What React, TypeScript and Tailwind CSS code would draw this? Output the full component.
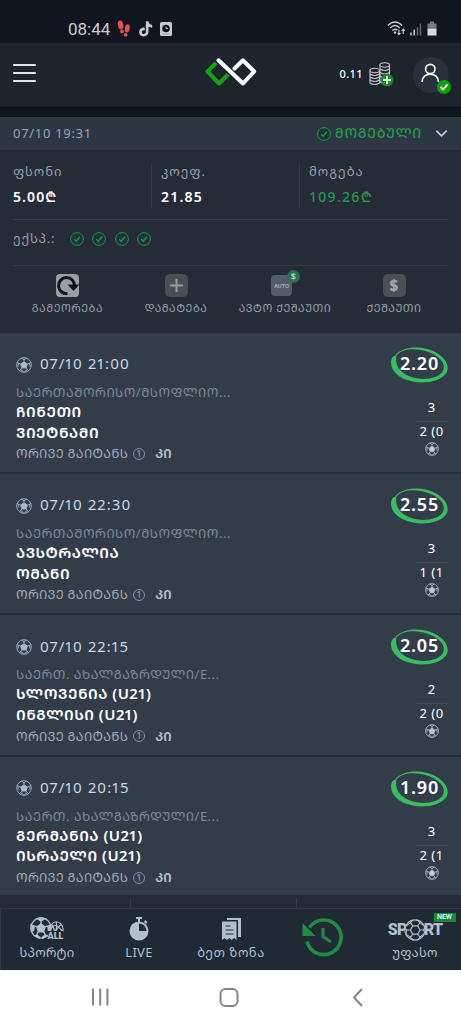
import React from 'react';
import { ChevronDown } from 'lucide-react';

const matches = [
  {
    time: '07/10 21:00',
    league: 'საერთაშორისო/მსოფლიო...',
    home: 'ჩინეთი',
    away: 'ვიეტნამი',
    odd: '2.20',
    homeScore: '3',
    awayScore: '2 (0',
  },
  {
    time: '07/10 22:30',
    league: 'საერთაშორისო/მსოფლიო...',
    home: 'ავსტრალია',
    away: 'ომანი',
    odd: '2.55',
    homeScore: '3',
    awayScore: '1 (1',
  },
  {
    time: '07/10 22:15',
    league: 'საერთ. ახალგაზრდული/E...',
    home: 'სლოვენია (U21)',
    away: 'ინგლისი (U21)',
    odd: '2.05',
    homeScore: '2',
    awayScore: '2 (0',
  },
  {
    time: '07/10 20:15',
    league: 'საერთ. ახალგაზრდული/E...',
    home: 'გერმანია (U21)',
    away: 'ისრაელი (U21)',
    odd: '1.90',
    homeScore: '3',
    awayScore: '2 (1',
  },
];

const Ball = ({ className }: { className: string }) => (
  <svg viewBox="0 0 24 24" className={className} fill="none" stroke="currentColor" strokeWidth="1.3">
    <circle cx="12" cy="12" r="11" />
    <path d="M12 7l5 3.600-1.900 5.900H8.900L7 10.600z" fill="currentColor" />
    <path d="M12 7V3.500M17 10.600l3.600-1.300M15.100 16.500l2.200 3M8.900 16.500l-2.200 3M7 10.600L3.400 9.300" />
    <path d="M8 1.800l4 2.200 4-2.200M22.500 8l-2.200 1.500.600 5M18.800 20.600l-1.800-1.500-4.500 3M5.200 20.600L7 19.100l4.500 3M1.500 8l2.200 1.500-.6 5" />
  </svg>
);

const PatchBall = ({ className }: { className: string }) => (
  <svg viewBox="0 0 24 24" className={className} fill="none" stroke="currentColor" strokeWidth="1.400">
    <circle cx="12" cy="12" r="11" />
    <path d="M12 7.500l4.500 3.300-1.700 5.300H9.200l-1.700-5.300zM8 1.800l4 2.600 4-2.600-4-1zM22.800 8.500l-3.300 1.500.500 4.500 2.500 1zM18.800 20.600l-2.300-1-3 2.500.5 1zM5.200 20.600l2.300-1 3 2.500-.5 1zM1.200 8.500L4.500 10 4 14.500l-2.500 1z" fill="currentColor" />
    <path d="M12 7.500V4M16.500 10.800l3-1M14.800 16l2 3.500M9.200 16l-2 3.500M7.500 10.800l-3-1" />
  </svg>
);

const OutlineBall = ({ className }: { className: string }) => (
  <svg viewBox="0 0 24 24" className={className} fill="#202a35" stroke="currentColor" strokeWidth="1.200">
    <circle cx="12" cy="12" r="11" />
    <path d="M9.500 7.500h5.500l2.500 4.500-2.500 4.500H9.500L7 12z" />
    <path d="M9.500 7.500L7 4l3-3M15 7.500L17.500 4l4.500 3.500M17.500 12h4l1-3M15 16.500l2.500 3.500 4-4M9.500 16.500L7 20l4 3M7 12H3l-2-2M7 4L2.500 7.500M3 12l-1 5M17.500 4L14 1M21.500 12l1 3M17.500 20l-3 3M7 20l-4-3" />
  </svg>
);

const CheckCircle = ({ className }: { className: string }) => (
  <svg viewBox="0 0 14 14" className={className} fill="#17382f" stroke="currentColor">
    <circle cx="7" cy="7" r="6.400" />
    <path d="M4.200 7.200l2 2L10 4.800" fill="none" strokeWidth="1.500" />
  </svg>
);

const StatusBar = () => (
  <div className="h-[43px] bg-[#10151e] flex items-end pl-[68px] pr-[24px] pb-[5px] text-[#c9cbce]">
    <span className="font-['Roboto'] text-[17px] leading-[20px] mb-[-1px] w-[49px]">08:44</span>
    <svg viewBox="0 0 14 17" className="w-[14px] h-[17px] mb-[1px]" fill="#dc5453">
      <ellipse cx="3.600" cy="5" rx="2.700" ry="4.500" transform="rotate(-10 3.600 5)" />
      <circle cx="5" cy="11.500" r="1.900" />
      <ellipse cx="10.300" cy="8.300" rx="2.400" ry="4.200" transform="rotate(10 10.300 8.300)" />
      <circle cx="8.600" cy="14.800" r="1.900" />
    </svg>
    <svg viewBox="0 0 24 24" className="w-[17px] h-[16px] ml-[6px] mb-[1px]" fill="currentColor">
      <path d="M12.500.5h4c.2 3.200 2.500 5.300 5.500 5.500v4c-2.200 0-4-.7-5.500-1.700v8c0 9-14 9.500-14 .2 0-4.500 4-7.300 8.300-6.500v4.200c-2-.7-4.300.4-4.300 2.500 0 3.800 6 3.500 6-.6z" />
    </svg>
    <svg viewBox="0 0 12 14" className="w-[12px] h-[14px] ml-[6px] mb-[2px]">
      <rect width="12" height="14" rx="1.500" fill="currentColor" />
      <circle cx="6" cy="6.500" r="3.800" fill="#10151e" />
      <path d="M6 4.500v2h2" stroke="#c9cbce" fill="none" />
      <path d="M2.500 12h7" stroke="#8f9296" strokeWidth=".7" />
    </svg>
    <svg viewBox="0 0 50 15" className="w-[50px] h-[15px] ml-auto mb-[2px]" fill="none" stroke="currentColor" strokeWidth="1.500">
      <path d="M.8 4.500Q8-2.700 15.200 4.500M3.200 7Q8 2.200 12.800 7M5.300 9.500Q8 7 10.500 9.300" />
      <circle cx="8" cy="11.500" r="1.200" fill="currentColor" stroke="none" />
      <path d="M12 8.500v5M10.500 12l1.500 1.700 1.500-1.700M16.200 13V8M14.700 9.800L16.200 8l1.500 1.800" strokeWidth="1.100" />
      <path d="M24 11.500v3M27.200 8.500v6" />
      <path d="M30.500 6v8.500M33.500 2.500v12" stroke="#65696f" />
      <path d="M43 .5h4v2h2.500v5h-9v-5H43z" fill="#777b80" stroke="none" />
      <path d="M40.500 7.500h9v7h-9z" fill="#d8dadc" stroke="none" />
    </svg>
  </div>
);

const Header = () => (
  <header className="h-[64px] bg-[#1e242c] flex items-center px-[13px] border-b border-[#1b2028]">
    <div className="w-[23px] flex flex-col gap-[6px] pb-[3px]">
      <i className="h-[2px] rounded bg-[#e4e5e6]" />
      <i className="h-[2px] rounded bg-[#e4e5e6]" />
      <i className="h-[2px] rounded bg-[#e4e5e6]" />
    </div>
    <svg viewBox="0 0 52 28" className="w-[52px] h-[28px] ml-[169px] mb-[6px]" fill="none" strokeWidth="4" strokeLinejoin="round">
      <path d="M11 5L2.500 13.500 14 25.500 23 16.500" stroke="#14a314" />
      <path d="M29.500 10.500L38 2.300 49.200 13.500 38 25.500 13.500 2.300" stroke="#fff" strokeLinecap="round" />
    </svg>
    <span className="ml-auto text-[11px] font-medium tracking-[0.400px] text-white mb-[1px]">0.11</span>
    <svg viewBox="0 0 25 25" className="w-[25px] h-[25px] ml-[6px]" fill="#1e242c" stroke="#c4c7ca" strokeWidth="1.100">
      <path d="M11 3v17q4.500 3 9.500 0V3" />
      <path d="M11 7q4.500 3 9.500 0M11 10.500q4.500 3 9.500 0M11 14q4.500 3 9.500 0" fill="none" />
      <ellipse cx="15.700" cy="3" rx="4.800" ry="2.200" />
      <path d="M1 9v12q4.500 3 9.500 0V9" />
      <path d="M1 12q4.500 3 9.500 0M1 15q4.500 3 9.500 0M1 18q4.500 3 9.500 0" fill="none" />
      <ellipse cx="5.700" cy="8.500" rx="4.800" ry="2.200" />
      <circle cx="18" cy="18" r="6.300" fill="#168d30" stroke="none" />
      <path d="M18 14v8M14 18h8" stroke="#e8f1e9" strokeWidth="1.800" />
    </svg>
    <div className="relative w-[36px] h-[36px] rounded-full bg-[#29313c] ml-[19px] mr-[-1px]">
      <svg viewBox="0 0 36 36" className="w-[36px] h-[36px]" fill="none" stroke="#f1f2f3" strokeWidth="1.700">
        <circle cx="17.300" cy="12" r="4.700" />
        <path d="M9 25C9 14.500 25.500 14.500 25.500 25" />
      </svg>
      <svg viewBox="0 0 14 14" className="absolute w-[14px] h-[14px] left-[24px] top-[23px]">
        <circle cx="7" cy="7" r="7" fill="#0ba10d" />
        <path d="M3.500 7l2.500 2.500 4.500-5" fill="none" stroke="#fff" strokeWidth="1.800" />
      </svg>
    </div>
  </header>
);

const Summary = () => (
  <section className="h-[183px] bg-[#252c38] px-[13px] text-[#989fa9]">
    <div className="h-[70px] flex border-b border-[#343b47] pt-[13px]">
      <div className="w-[139px] h-[45px] border-r border-[#343b47]">
        <div className="text-[13px] leading-[18px] mt-[-1px] tracking-[0.900px]">ფსონი</div>
        <div className="text-[14px] leading-[20px] mt-[7px] font-semibold text-white tracking-[1.100px]">5.00₾</div>
      </div>
      <div className="w-[148px] h-[45px] border-r border-[#343b47] pl-[9px]">
        <div className="text-[13px] leading-[18px] mt-[-1px] tracking-[1px]">კოეფ.</div>
        <div className="text-[14px] leading-[20px] mt-[7px] font-semibold text-white tracking-[1.200px]">21.85</div>
      </div>
      <div className="pl-[9px]">
        <div className="text-[13px] leading-[18px] mt-[-1px] tracking-[1px]">მოგება</div>
        <div className="text-[14px] leading-[20px] mt-[7px] font-medium text-[#27974a] tracking-[1.300px]">109.26₾</div>
      </div>
    </div>
    <div className="h-[46px] flex items-center border-b border-[#343b47] pb-[8px]">
      <span className="w-[57px] text-[13px] tracking-[0.800px]">ექსპ.:</span>
      <div className="flex gap-[8.400px] text-[#2a8a58]">
        {[0, 1, 2, 3].map((i) => (
          <CheckCircle key={i} className="w-[14px] h-[14px]" />
        ))}
      </div>
    </div>
    <div className="flex pt-[8px] text-[11px] leading-[16px] tracking-[0.500px] [font-feature-settings:'case'] whitespace-nowrap">
      <div className="w-[109px] flex flex-col items-center">
        <svg viewBox="0 0 23 23" className="w-[23px] h-[23px] mb-[3px]">
          <rect width="23" height="23" rx="4" fill="#9a9ea6" />
          <path d="M11.500 19.500A8 8 0 1 1 18.500 12" fill="none" stroke="#101317" strokeWidth="3" />
          <path d="M11.500 10.500H23.500L17.500 17z" fill="#101317" />
        </svg>
        <span>გამეორება</span>
      </div>
      <div className="w-[108px] flex flex-col items-center">
        <svg viewBox="0 0 23 23" className="w-[23px] h-[23px] mb-[3px]">
          <rect width="23" height="23" rx="5" fill="#4a4e55" />
          <path d="M11.500 5v13M5 11.500h13" stroke="#989ba0" strokeWidth="2" />
        </svg>
        <span>დამატება</span>
      </div>
      <div className="relative w-[110px] flex flex-col items-center">
        <div className="w-[21px] h-[21px] mt-[1px] mb-[4px] mr-[7px] rounded bg-[#545c69] font-['Roboto'] text-[6px] leading-[21px] tracking-[-0.200px] font-bold text-center text-[#a5abb5]">AUTO</div>
        <div className="absolute left-[57px] top-[-4px] w-[13px] h-[13px] rounded-full bg-[#26704f] text-[9px] leading-[13px] font-bold text-center text-[#b7cdbf]">$</div>
        <span>ავტო ქეშაუთი</span>
      </div>
      <div className="w-[108px] flex flex-col items-center">
        <div className="w-[23px] h-[23px] mb-[3px] rounded-[5px] bg-[#4a4e55] text-[15px] leading-[22px] font-black text-center text-[#a1a4a8]">$</div>
        <span>ქეშაუთი</span>
      </div>
    </div>
  </section>
);

const MatchCard = ({ match }: { match: (typeof matches)[number] }) => (
  <article className="h-[141.200px] bg-[#323d49] border-b-2 border-[#252e39] pl-[16px] pr-[13px] pt-[18px] flex justify-between">
    <div className="whitespace-nowrap [font-feature-settings:'case']">
      <div className="h-[25px] flex items-center text-[#ccd8e5]">
        <Ball className="w-[16px] h-[16px] mr-[8px] mt-[2px] text-[#a9bacb]" />
        <span className="text-[15px] tracking-[1.100px]">{match.time}</span>
      </div>
      <div className="mt-[7px] text-[13px] leading-[18px] tracking-[0.450px] text-[#7c8996]">{match.league}</div>
      <div className="text-[15px] leading-[20.500px] tracking-[0.500px] font-semibold text-white">{match.home}</div>
      <div className="text-[15px] leading-[20.500px] tracking-[0.500px] font-semibold text-white">{match.away}</div>
      <div className="mt-[2px] h-[20px] flex items-center text-[13px] tracking-[0.230px] text-[#9eabb9]">
        ორივე გაიტანს
        <span className="w-[12px] h-[12px] ml-[5px] mr-[10px] border border-[#8290a0] rounded-full text-[9px] leading-[10px] text-center">1</span>
        <b className="font-semibold text-[#b6c3d1]">კი</b>
      </div>
    </div>
    <div className="w-[57px] flex flex-col items-end text-white">
      <div className="relative w-[57px] h-[36px] mt-[-4px] flex justify-center">
        <svg viewBox="0 0 57 36" className="absolute inset-0 w-[57px] h-[36px]" fill="#38bd60">
          <path fillRule="evenodd" d="M4.500 8C12-1 32-2 46 6 56 12 59 21 55 26.500 49 34.500 34 37 22 34.500 8 32 0 24 0 15.500 0 11 2.500 8.500 5 8.500zM5.500 8.500C4 15 6.500 22 13 26.500 21 32 34 33.500 44 30 53 27 56 19 49 12 38 1.500 14-1.500 5.500 8.500z" />
        </svg>
        <span className="relative text-[18px] leading-[33px] font-semibold tracking-[0.800px]">{match.odd}</span>
      </div>
      <div className="w-[33px] mt-[14px] flex flex-col items-center text-[13px] leading-[18px]">
        <span className="h-[25px] pt-[1px] w-full text-center border-b border-[#414b57]">{match.homeScore}</span>
        <span className="whitespace-nowrap tracking-[0.500px]">{match.awayScore}</span>
        <Ball className="w-[14px] h-[14px] mt-[2px] text-[#c0cad6]" />
      </div>
    </div>
  </article>
);

const BottomNav = () => (
  <>
    <div className="h-[12px] bg-[#232a36] flex">
      <i className="w-[131px] mt-[2px] border-r border-[#343b47]" />
      <i className="w-[166px] mt-[2px] border-r border-[#343b47]" />
    </div>
    <nav className="h-[62px] bg-[#202a35] border-t border-l border-[#2e3843] flex text-[13px] leading-[18px] text-[#b2bfce] whitespace-nowrap">
      <div className="w-[92px] flex flex-col items-center pt-[8px]">
        <div className="relative w-[35px] h-[24px] mb-[2px]">
          <PatchBall className="w-[22px] h-[22px]" />
          <svg viewBox="0 0 18 18" className="absolute left-[19px] top-[3px] w-[16px] h-[16px]" fill="none" stroke="currentColor" strokeWidth="1.300">
            <path d="M3 5Q8-1 14 5q3 5 1 9M3 5q4 6 3 10M8 2q2 7-2 12M14 5Q8 9 7 15M2 10Q7 1 15 13" />
          </svg>
          <span className="absolute left-[18px] top-[14px] h-[9px] font-['Roboto'] text-[9px] leading-[10px] font-black bg-[#202a35]">ALL</span>
        </div>
        <span className="tracking-[0.200px]">სპორტი</span>
      </div>
      <div className="w-[92px] flex flex-col items-center pt-[8px]">
        <svg viewBox="0 0 20 24" className="w-[20px] h-[24px] mb-[2px]" fill="currentColor">
          <path d="M7 0h6v2h-2v3H9V2H7zM16 3l2.500 2-1.500 2-2-2z" />
          <circle cx="10" cy="14" r="9.500" />
          <path d="M10 14V6.500a7.500 7.500 0 0 1 7.500 7.500z" fill="#202a35" />
        </svg>
        <span className="tracking-[0.300px]">LIVE</span>
      </div>
      <div className="w-[92px] flex flex-col items-center pt-[9px]">
        <svg viewBox="0 0 19 23" className="w-[19px] h-[23px] mb-[2px]" fill="currentColor">
          <path d="M5 0h14v19h-3V2H5zM0 3.500h14.500V22l-2.400-2-2.400 2-2.400-2-2.400 2-2.400-2L0 22z" />
          <path d="M3.500 8h5M3.500 12h8M3.500 16h8" stroke="#202a35" strokeWidth="1.200" />
        </svg>
        <span className="tracking-[0.500px]">ბეთ ზონა</span>
      </div>
      <div className="w-[92px] pt-[8px] pl-[25px]">
        <svg viewBox="0 0 40 40" className="w-[41px] h-[40px]" fill="none" stroke="#208b43" strokeWidth="3.600">
          <path d="M7 10.500A17.300 17.300 0 1 1 4.500 24.500" />
          <path d="M0 6l13 13H0z" fill="#208b43" stroke="none" />
          <path d="M20.500 11v8.500l8 5.500" strokeWidth="3" />
        </svg>
      </div>
      <div className="w-[92px] flex flex-col items-center pt-[4px]">
        <span className="ml-[59px] w-[22px] h-[9px] bg-[#168a38] font-['Roboto'] text-white text-[7px] leading-[9px] font-medium text-center">NEW</span>
        <div className="h-[20px] mt-[-2px] flex items-center font-['Roboto'] text-[16px] font-black">
          <span className="tracking-[-0.800px]">SP</span>
          <OutlineBall className="w-[22px] h-[22px] ml-[-3px] mr-[-2px] z-10" />
          <span className="tracking-[-0.800px]">RT</span>
        </div>
        <span className="mt-[3px] tracking-[0.300px]">უფასო</span>
      </div>
    </nav>
  </>
);

const App = () => (
  <div className="w-[461px] h-[1024px] overflow-hidden bg-[#10151c] font-['Noto_Sans','Noto_Sans_Georgian','DejaVu_Sans',sans-serif]">
    <StatusBar />
    <Header />
    <div className="mt-[10px] h-[33px] bg-[#2d3743] flex items-center px-[13px]">
      <span className="text-[13px] tracking-[0.700px] text-[#9aa4b0]">07/10 19:31</span>
      <CheckCircle className="w-[14px] h-[14px] ml-auto text-[#239546]" />
      <span className="ml-[4px] text-[14px] leading-[18px] mb-[2px] font-medium tracking-[0.700px] [font-feature-settings:'case'] text-[#279646]">მოგებული</span>
      <ChevronDown className="w-[19px] h-[19px] ml-[10px] mr-[-3px] text-[#c9d0d8]" />
    </div>
    <Summary />
    <main className="h-[563px] overflow-hidden border-b border-[#252e39]">
      {matches.map((match, index) => (
        <MatchCard key={index} match={match} />
      ))}
    </main>
    <BottomNav />
    <footer className="h-[54px] bg-white">
      <svg viewBox="0 0 461 54" className="w-full h-full" fill="none" stroke="#858585" strokeWidth="2">
        <path d="M93 18.500v17M100.200 18.500v17M107.400 18.500v17M362 19l-8 8.500 8 8.500" />
        <rect x="220.500" y="19" width="17" height="17" rx="5" />
      </svg>
    </footer>
  </div>
);

export default App;
